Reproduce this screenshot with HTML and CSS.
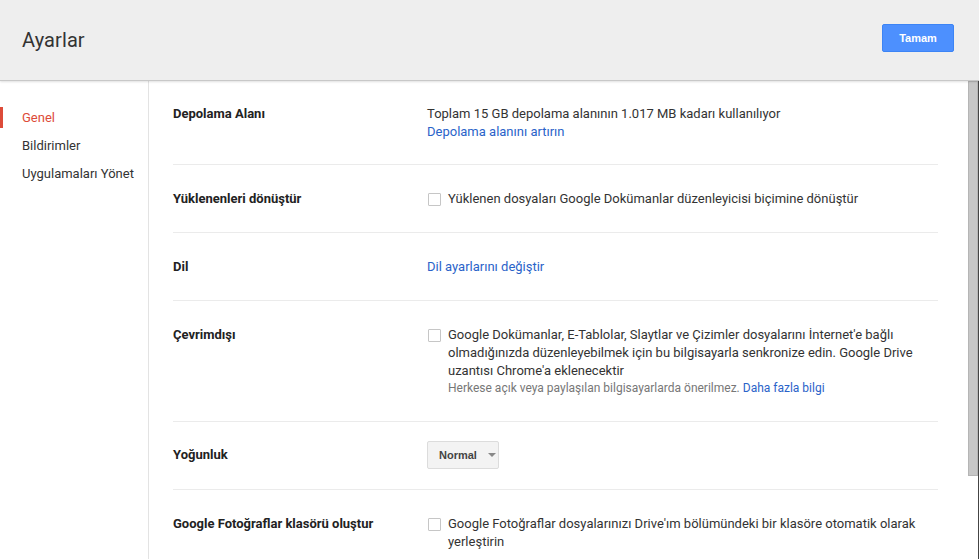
FILE: index.html
```html
<!DOCTYPE html>
<html lang="tr">
<head>
<meta charset="utf-8">
<title>Ayarlar</title>
<link rel="stylesheet" href="styles.css">
</head>
<body>
<div class="app">
  <header class="topbar">
    <h1 class="title">Ayarlar</h1>
    <button class="btn-primary">Tamam</button>
  </header>
  <div class="body">
    <nav class="sidebar">
      <a class="nav-item active">Genel</a>
      <a class="nav-item">Bildirimler</a>
      <a class="nav-item">Uygulamaları Yönet</a>
    </nav>
    <main class="content">
      <section class="row first">
        <div class="label">Depolama Alanı</div>
        <div class="value">
          <div>Toplam 15 GB depolama alanının 1.017 MB kadarı kullanılıyor</div>
          <a class="link">Depolama alanını artırın</a>
        </div>
      </section>
      <section class="row">
        <div class="label">Yüklenenleri dönüştür</div>
        <div class="value check">
          <span class="box"></span>
          <div class="check-text">Yüklenen dosyaları Google Dokümanlar düzenleyicisi biçimine dönüştür</div>
        </div>
      </section>
      <section class="row">
        <div class="label">Dil</div>
        <div class="value"><a class="link">Dil ayarlarını değiştir</a></div>
      </section>
      <section class="row">
        <div class="label">Çevrimdışı</div>
        <div class="value check">
          <span class="box"></span>
          <div class="check-text">
            <div>Google Dokümanlar, E-Tablolar, Slaytlar ve Çizimler dosyalarını İnternet'e bağlı olmadığınızda düzenleyebilmek için bu bilgisayarla senkronize edin. Google Drive uzantısı Chrome'a eklenecektir</div>
            <div class="note">Herkese açık veya paylaşılan bilgisayarlarda önerilmez. <a class="link">Daha fazla bilgi</a></div>
          </div>
        </div>
      </section>
      <section class="row select-row">
        <div class="label">Yoğunluk</div>
        <div class="value">
          <div class="select">Normal <span class="caret"></span></div>
        </div>
      </section>
      <section class="row last">
        <div class="label">Google Fotoğraflar klasörü oluştur</div>
        <div class="value check">
          <span class="box"></span>
          <div class="check-text">Google Fotoğraflar dosyalarınızı Drive'ım bölümündeki bir klasöre otomatik olarak yerleştirin</div>
        </div>
      </section>
    </main>
    <div class="scrollbar"><div class="thumb"></div></div>
  </div>
</div>
</body>
</html>
```

FILE: styles.css
```css
* { box-sizing: border-box; }
html, body { margin: 0; padding: 0; height: 100%; overflow: hidden; }
body {
  font-family: Roboto, "Liberation Sans", Arial, sans-serif;
  font-size: 13px;
  color: #222;
  background: #fff;
}
.app { width: 979px; height: 559px; display: flex; flex-direction: column; }
.topbar {
  height: 81px;
  flex: none;
  background: #eeeeee;
  border-bottom: 1px solid #c8c8c8;
  box-shadow: 0 1px 2px rgba(0,0,0,0.12);
  display: flex;
  align-items: center;
  justify-content: space-between;
  padding: 0 25px 1px 22px;
  position: relative;
  z-index: 1;
}
.title {
  margin: 0;
  font-weight: 400;
  font-size: 20px;
  color: #333;
  letter-spacing: 0.1px;
}
.btn-primary {
  width: 72px;
  height: 28px;
  margin-top: -4px;
  background: #4d90fe;
  border: 1px solid #3c84f5;
  border-radius: 2px;
  color: #fff;
  font-family: Arial, "Liberation Sans", sans-serif;
  font-weight: bold;
  font-size: 11px;
  padding: 0;
}
.body { flex: 1; display: flex; min-height: 0; }
.sidebar {
  width: 149px;
  flex: none;
  border-right: 1px solid #e3e3e3;
  padding-top: 27px;
  display: flex;
  flex-direction: column;
}
.nav-item {
  display: block;
  height: 28px;
  line-height: 18px;
  padding: 1px 0 0 22px;
  color: #333;
  font-size: 13px;
  position: relative;
}
.nav-item.active { color: #dd4b39; }
.nav-item.active::before {
  content: "";
  position: absolute;
  left: 0;
  top: -1px;
  width: 3px;
  height: 21px;
  background: #dd4b39;
}
.content {
  width: 819px;
  flex: none;
  padding: 0 30px 0 24px;
}
.row {
  display: flex;
  padding: 25px 0 24px;
  border-bottom: 1px solid #ebebeb;
  line-height: 18px;
}
.row.first { padding-top: 24px; padding-bottom: 23px; }
.row.select-row { padding: 19px 0 20px; align-items: center; }
.row.last { border-bottom: 0; }
.label {
  width: 254px;
  flex: none;
  font-weight: bold;
  color: #222;
}
.value { flex: 1; color: #333; }
.link { color: #2a63c9; text-decoration: none; }
.check { display: flex; align-items: flex-start; }
.box {
  width: 13px;
  height: 13px;
  flex: none;
  margin: 3px 7px 0 1px;
  border: 1px solid #c6c6c6;
  border-radius: 1px;
  background: #fff;
}
.check-text { width: 470px; }
.note { font-size: 12px; line-height: 17px; color: #777; }
.note .link { color: #2a63c9; }
.select {
  display: inline-flex;
  align-items: center;
  height: 28px;
  width: 72px;
  padding-left: 11px;
  background: #f3f3f3;
  border: 1px solid #dcdcdc;
  border-radius: 2px;
  font-family: Arial, "Liberation Sans", sans-serif;
  font-weight: bold;
  font-size: 11px;
  color: #444;
}
.caret {
  margin-left: 11px;
  width: 0;
  height: 0;
  border-left: 4px solid transparent;
  border-right: 4px solid transparent;
  border-top: 4px solid #888;
}
.scrollbar {
  width: 11px;
  flex: none;
  border-right: 1px solid #444;
}
.thumb {
  width: 10px;
  height: 395px;
  background: #c7c7c7;
  border: 1px solid #b5b5b5;
}
```
